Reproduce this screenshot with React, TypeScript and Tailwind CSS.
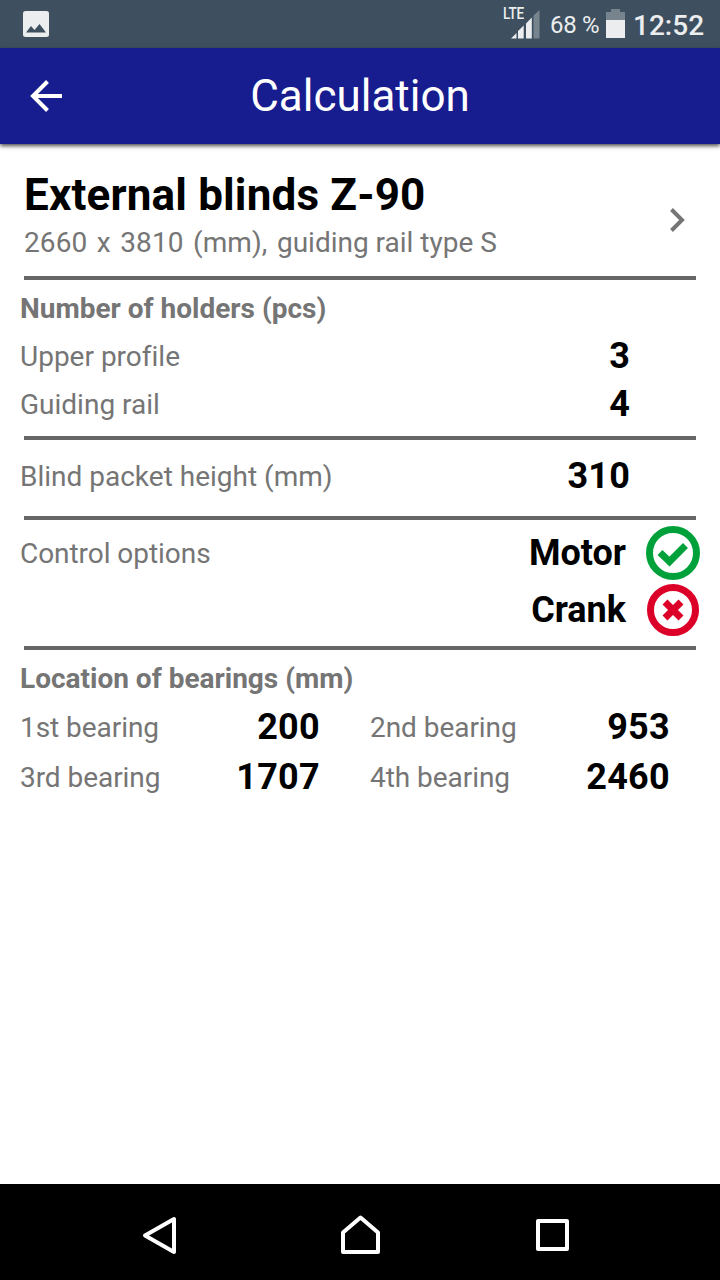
import type { ReactNode } from "react";

function StatusBar() {
  return (
    <div className="flex h-12 shrink-0 bg-[#3e505f] text-[#ebedef]">
      <svg className="mt-[11px] ml-[23px] h-[26px] w-[26px] shrink-0" viewBox="0 0 26 26">
        <rect width="26" height="26" rx="2.500" fill="#ebedef" />
        <path d="M3 21.500 8 15l3.500 4L16.500 13l6.500 8.500z" fill="#3e505f" />
      </svg>
      <div className="ml-auto flex">
        <span className="mt-[4px] w-[21px] origin-left scale-x-[0.8] text-[17px] leading-[19px] font-medium tracking-[-0.3px]">LTE</span>
        <svg className="-ml-[13px] mt-[10px] h-[29px] w-[29px]" viewBox="0 0 29 29">
          <path d="M0 28.500 5.500 23v5.500z M7 21 12.700 15.500v13H7z M15 13.500 20.800 7.500v21H15z" fill="#ebedef" />
          <path d="M22.500 5.500 28.500 0v28.500h-6z" fill="#77848e" />
        </svg>
        <span className="ml-[10px] w-[56px] text-2xl leading-[50px] tracking-[-0.3px] whitespace-nowrap">68 %</span>
        <svg className="mt-[9px] h-[29px] w-[19px]" viewBox="0 0 19 29">
          <path d="M5 0h9v3h5v8H0V3h5z" fill="#77848e" />
          <path d="M0 11h19v18H0z" fill="#ebedef" />
        </svg>
        <span className="ml-[8px] w-[87px] text-[28px] leading-[51px] font-medium">12:52</span>
      </div>
    </div>
  );
}

function AppBar() {
  return (
    <header className="z-10 grid h-24 shrink-0 grid-cols-[96px_1fr_96px] items-center bg-[#171c8f] text-white shadow-[0_2px_4px_rgba(0,0,0,0.7)]">
      <svg className="ml-[30px] h-8 w-[33px]" viewBox="0 0 33 32" fill="none" stroke="white" strokeWidth="4">
        <path d="M32 16H3M17.500 1.500 3 16l14.500 14.500" />
      </svg>
      <h1 className="text-center text-[44px] leading-[96px]">Calculation</h1>
    </header>
  );
}

function Rule() {
  return <div className="mx-6 h-1 shrink-0 bg-[#666666]" />;
}

function Row({ label, value }: { label: string; value: string }) {
  return (
    <div className="flex h-12 items-center justify-between pr-[90px] pl-5">
      <span>{label}</span>
      <div className="flex pb-[2px] tracking-[0.2px]">
        <Value>{value}</Value>
      </div>
    </div>
  );
}

function Value({ children }: { children: ReactNode }) {
  return <span className="text-4xl leading-[46px] font-bold text-black">{children}</span>;
}

function Bearing({ label, value }: { label: string; value: string }) {
  return (
    <div className="flex h-[50px] w-[300px] items-center justify-between">
      <span className="tracking-[-0.05px]">{label}</span>
      <div className="flex pb-[2px] tracking-[0.3px]">
        <Value>{value}</Value>
      </div>
    </div>
  );
}

function NavBar() {
  return (
    <nav className="flex h-24 shrink-0 items-center bg-black pt-[6px]">
      <svg className="ml-[142px] h-10 w-9" viewBox="0 0 36 40" fill="none" stroke="white" strokeWidth="4" strokeLinejoin="round">
        <path d="M32 4v33L3 20.500z" />
      </svg>
      <svg className="ml-[162px] h-10 w-10" viewBox="0 0 40 40" fill="none" stroke="white" strokeWidth="4" strokeLinejoin="round">
        <path d="M3 17.500 20.500 2.500 38 17.500V37H3z" />
      </svg>
      <svg className="ml-[155px] h-10 w-10" viewBox="0 0 40 40" fill="none" stroke="white" strokeWidth="4" strokeLinejoin="round">
        <rect x="3" y="6" width="29" height="28" />
      </svg>
    </nav>
  );
}

export default function App() {
  return (
    <div className="flex h-[1280px] w-[720px] flex-col overflow-hidden bg-white font-['Roboto',sans-serif] text-[28px] leading-[34px] text-[#757575] [font-variant-ligatures:none]">
      <StatusBar />
      <AppBar />
      <main className="flex flex-1 flex-col">
        <section className="flex h-[132px] items-center justify-between pr-[34px] pl-6">
          <div className="pt-[18px] pb-[5px]">
            <h2 className="h-[55px] text-[44px] leading-[52px] font-bold tracking-[0.16px] text-black">External blinds Z-90</h2>
            <p className="h-[40px] leading-[38px] whitespace-nowrap">
              <span className="tracking-[0.1px] [word-spacing:2.4px]">2660 x 3810 (mm), </span>
              <span>guiding rail type S</span>
            </p>
          </div>
          <svg className="mt-5 h-6 w-4" viewBox="0 0 16 24" fill="none" stroke="#757575" strokeWidth="4">
            <path d="m1.500 1.500 10.500 10.500L1.500 22.500" />
          </svg>
        </section>
        <Rule />
        <section className="h-[156px] pt-[5px]">
          <h3 className="flex h-12 items-center pl-5 font-bold">Number of holders (pcs)</h3>
          <Row label="Upper profile" value="3" />
          <Row label="Guiding rail" value="4" />
        </section>
        <Rule />
        <section className="h-[76px] pt-[13px]">
          <Row label="Blind packet height (mm)" value="310" />
        </section>
        <Rule />
        <section className="flex h-[126px] justify-between pt-[4px] pr-5 pl-5">
          <span className="h-[60px] leading-[60px] tracking-[-0.05px]">Control options</span>
          <div className="flex flex-col">
            <div className="flex h-[57px] items-center justify-end gap-5">
              <Value>Motor</Value>
              <svg className="h-[54px] w-[54px]" viewBox="0 0 54 54" fill="none" stroke="#00a13a">
                <circle cx="27" cy="27" r="23.500" strokeWidth="7" />
                <path d="m14 26.500 9.500 9L39.500 19.500" strokeWidth="7" />
              </svg>
            </div>
            <div className="flex h-[57px] items-center justify-end gap-5">
              <Value>Crank</Value>
              <svg className="h-[54px] w-[54px]" viewBox="0 0 54 54" fill="none" stroke="#dc0028">
                <circle cx="27" cy="27" r="22.500" strokeWidth="7" />
                <path d="m19 19 16 16M35 19 19 35" strokeWidth="7" />
              </svg>
            </div>
          </div>
        </section>
        <Rule />
        <section className="pt-[5px]">
          <h3 className="flex h-12 items-center pl-5 font-bold">Location of bearings (mm)</h3>
          <div className="grid grid-cols-[300px_300px] gap-x-[50px] pl-5">
            <Bearing label="1st bearing" value="200" />
            <Bearing label="2nd bearing" value="953" />
            <Bearing label="3rd bearing" value="1707" />
            <Bearing label="4th bearing" value="2460" />
          </div>
        </section>
      </main>
      <NavBar />
    </div>
  );
}
